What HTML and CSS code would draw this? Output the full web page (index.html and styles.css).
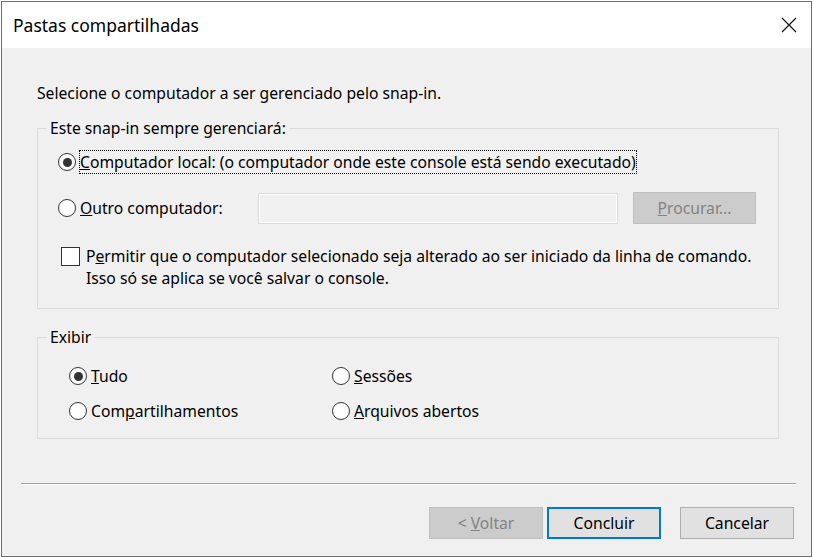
FILE: index.html
```html
<!DOCTYPE html>
<html lang="pt-BR">
<head>
    <meta charset="UTF-8">
    <title>Pastas compartilhadas</title>
    <link rel="stylesheet" href="styles.css">
</head>
<body>
    <div class="dialog">
        <div class="titlebar">
            <span class="title">Pastas compartilhadas</span>
            <svg class="close" width="16" height="16" viewBox="0 0 16 16">
                <path d="M1 1 L15 15 M15 1 L1 15" stroke="#1a1a1a" stroke-width="1.3" fill="none"/>
            </svg>
        </div>
        <div class="content">
            <p class="intro">Selecione o computador a ser gerenciado pelo snap-in.</p>

            <fieldset class="group group-target">
                <legend>Este snap-in sempre gerenciará:</legend>
                <div class="row row-local">
                    <span class="radio checked"></span>
                    <span class="label focus"><u>C</u>omputador local: (o computador onde este console está sendo executado)</span>
                </div>
                <div class="row row-other">
                    <span class="radio"></span>
                    <span class="label label-other"><u>O</u>utro computador:</span>
                    <span class="textbox"></span>
                    <span class="btn disabled btn-browse"><span><u>P</u>rocurar...</span></span>
                </div>
                <div class="row row-check">
                    <span class="checkbox"></span>
                    <span class="label">P<u>e</u>rmitir que o computador selecionado seja alterado ao ser iniciado da linha de comando.<br>Isso só se aplica se você salvar o console.</span>
                </div>
            </fieldset>

            <fieldset class="group group-view">
                <legend>Exibir</legend>
                <div class="options">
                    <div class="row"><span class="radio checked"></span><span class="label"><u>T</u>udo</span></div>
                    <div class="row"><span class="radio"></span><span class="label"><u>S</u>essões</span></div>
                    <div class="row"><span class="radio"></span><span class="label">Com<u>p</u>artilhamentos</span></div>
                    <div class="row"><span class="radio"></span><span class="label"><u>A</u>rquivos abertos</span></div>
                </div>
            </fieldset>

            <div class="separator"></div>

            <div class="buttons">
                <span class="btn disabled"><span>&lt; <u>V</u>oltar</span></span>
                <span class="btn default"><span>Concluir</span></span>
                <span class="btn cancel"><span>Cancelar</span></span>
            </div>
        </div>
    </div>
</body>
</html>
```

FILE: styles.css
```css
body {
    margin: 0;
    width: 813px;
    height: 558px;
    background-color: #ffffff;
    font-family: "Noto Sans", "Liberation Sans", Arial, sans-serif;
    font-size: 15.7px;
    color: #000000;
    overflow: hidden;
}

.dialog {
    box-sizing: border-box;
    margin: 1px 1px 0 1px;
    width: 811px;
    height: 556px;
    border: 1px solid #6e6e6e;
    background-color: #f0f0f0;
    display: flex;
    flex-direction: column;
}

.titlebar {
    height: 46px;
    background-color: #ffffff;
    display: flex;
    align-items: center;
    justify-content: space-between;
    padding: 0 14px 0 11px;
}

.title {
    font-size: 17.5px;
    color: #000000;
}

.content {
    flex: 1;
    padding: 0 17px 0 35px;
}

.intro {
    margin: 34px 0 0 0;
    line-height: 22px;
}

/* group boxes */
.group {
    margin: 0;
    border: 1px solid #dcdcdc;
    padding: 0;
    width: 742px;
    box-sizing: border-box;
}

.group legend {
    padding: 0 3px;
    margin-left: 9px;
    line-height: 22px;
}

.group-target {
    margin-top: 13px;
    height: 192px;
}

.group-view {
    margin-top: 17px;
    height: 113px;
}

.row {
    display: flex;
    align-items: center;
    line-height: 22px;
}

.row-local {
    margin: 12px 0 0 20px;
}

.row-other {
    margin: 19px 0 0 20px;
}

.row-check {
    margin: 21px 0 0 23px;
    align-items: flex-start;
}

.radio {
    box-sizing: border-box;
    width: 18px;
    height: 18px;
    border: 1.5px solid #333333;
    border-radius: 50%;
    background-color: #ffffff;
    display: flex;
    align-items: center;
    justify-content: center;
    flex-shrink: 0;
    margin-right: 4px;
}

.radio.checked::after {
    content: "";
    width: 9px;
    height: 9px;
    border-radius: 50%;
    background-color: #333333;
}

.checkbox {
    box-sizing: border-box;
    width: 19px;
    height: 19px;
    border: 1.5px solid #333333;
    background-color: #ffffff;
    flex-shrink: 0;
    margin: 2px 6px 0 0;
}

.focus {
    outline: 1px dotted #000000;
    outline-offset: 0;
}

.label-other {
    width: 178px;
}

.textbox {
    box-sizing: border-box;
    width: 360px;
    height: 31px;
    border: 1px solid #d9d9d9;
    background-color: #f0f0f0;
    box-shadow: inset 0 0 0 1px #ffffff;
}

.btn {
    box-sizing: border-box;
    display: flex;
    align-items: center;
    justify-content: center;
    height: 32px;
    border: 1px solid #adadad;
    background-color: #e1e1e1;
    color: #000000;
}

.btn.disabled {
    background-color: #cccccc;
    border-color: #bfbfbf;
    color: #838383;
}

.btn-browse {
    width: 123px;
    margin-left: 15px;
}

.options {
    display: grid;
    grid-template-columns: 263px 263px;
    row-gap: 13px;
    margin: 17px 0 0 31px;
}

.separator {
    margin: 44px 0 0 -16px;
    width: 775px;
    height: 1px;
    background-color: #a0a0a0;
    border-bottom: 1px solid #ffffff;
}

.buttons {
    display: flex;
    justify-content: flex-end;
    margin: 22px 0 0 0;
    gap: 4px;
}

.buttons .btn {
    width: 114px;
}

.btn.default {
    border: 2px solid #0078d7;
    margin-right: 15px;
}
```
